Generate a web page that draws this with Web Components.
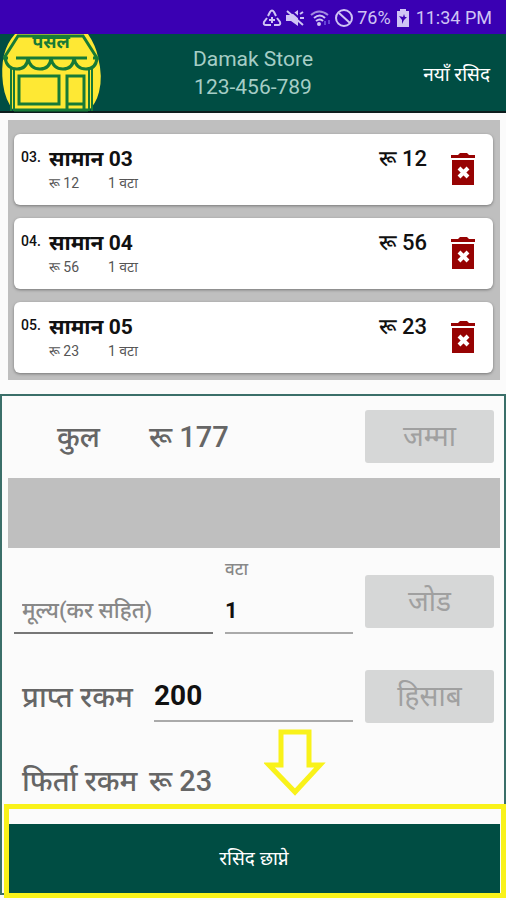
<!DOCTYPE html>
<html lang="ne">
<head>
<meta charset="utf-8">
<meta name="viewport" content="width=device-width, initial-scale=1">
<title>Damak Store</title>
<style>
  body {
    margin: 0;
    background: #fbfbfb;
    color: #111;
    font-family: Roboto, "Noto Sans Devanagari", "Noto Sans", sans-serif;
  }
</style>
</head>
<body>
<store-app></store-app>

<script>
const reset = ':host, *, *::before, *::after { box-sizing: border-box; } button, input { font: inherit; margin: 0; }';

class StatusBar extends HTMLElement {
  constructor() {
    super();
    this.attachShadow({ mode: 'open' });
  }

  connectedCallback() {
    this.shadowRoot.innerHTML = `
      <style>
        ${reset}
        :host {
          display: flex;
          align-items: center;
          justify-content: flex-end;
          gap: 3px;
          height: 34px;
          padding: 2px 14px 0 0;
          background: #3a00b3;
          color: #cfc4f4;
          font-size: 18px;
          line-height: 24px;
        }
        svg { display: block; flex: none; }
        .battery { margin: 0 3px 0 2px; }
      </style>
      <svg width="20" height="18" viewBox="0 0 20 18" fill="none" stroke="currentColor" stroke-width="2">
        <path d="M6 7l2-4q2-3 4 0l2 4M15 9l3 4q1 3-2 3h-4M9 16H4q-3 0-2-3l3-4"/>
        <path d="M7 11h6M10 8v6"/>
      </svg>
      <svg width="20" height="18" viewBox="0 0 20 18">
        <path fill="currentColor" d="M1 6h5l7-5v16l-7-5H1z"/>
        <path d="M4 0l16 14" stroke="#3a00b3" stroke-width="2"/>
        <path d="M2 2l16 14M15 5l3-2M15 9h4" stroke="currentColor" stroke-width="2"/>
      </svg>
      <svg width="24" height="18" viewBox="0 0 24 18" fill="none" stroke="currentColor" stroke-width="2">
        <path d="M3 6q8-7 17 0" opacity=".7"/>
        <path d="M6 9q6-5 11 0M8 12q4-3 7 0"/>
        <circle cx="11" cy="15" r="1" fill="currentColor"/>
        <path d="M17 12v4M21 11v4" stroke="#6545d6"/>
      </svg>
      <svg width="19" height="18" viewBox="0 0 19 18" fill="none" stroke="currentColor" stroke-width="2">
        <circle cx="9" cy="9" r="8"/>
        <path d="M4 4l11 10"/>
      </svg>
      <span>76%</span>
      <svg class="battery" width="14" height="18" viewBox="0 0 14 18">
        <path fill="currentColor" d="M4 0h6v2h3v16H1V2h3z"/>
        <path fill="#3a00b3" d="M3 7l4 1 1-3 1 3h2l-3 3-2 4v-4z"/>
      </svg>
      <span>11:34 PM</span>
    `;
  }
}

class StoreLogo extends HTMLElement {
  constructor() {
    super();
    this.attachShadow({ mode: 'open' });
  }

  connectedCallback() {
    this.shadowRoot.innerHTML = `
      <style>
        :host { display: block; }
        svg { display: block; overflow: visible; }
        text { font-size: 18px; font-weight: 700; }
      </style>
      <svg width="102" height="77" viewBox="0 0 102 77" role="img" aria-label="पसल">
        <path fill="#fee834" d="M15 0h73q8 12 10 23 5 20 1 35-3 12-11 19H14Q5 66 3 50 1 34 4 21 7 9 15 0z"/>
        <g fill="none" stroke="#177a36" stroke-width="3">
          <path d="M4 24 18 2h65l14 22M3 24h5M16 24h71M93 24h6"/>
          <path d="M5 24q2 11 12 11t11-11q2 11 12 11t11-11q2 11 12 11t11-11q2 11 12 11t11-11"/>
          <path d="M11 34v43M14 36v41M89 36v41M92 34v43" stroke-width="2"/>
          <path d="M19 42h40v28H19zM67 77V42h17v35M67 70h17M14 76h74"/>
        </g>
        <text x="51" y="14" text-anchor="middle" fill="#177a36">पसल</text>
      </svg>
    `;
  }
}

class StoreHeader extends HTMLElement {
  constructor() {
    super();
    this.attachShadow({ mode: 'open' });
  }

  connectedCallback() {
    this.shadowRoot.innerHTML = `
      <style>
        ${reset}
        :host {
          display: grid;
          grid-template-columns: 1fr auto 1fr;
          align-items: center;
          height: 79px;
          background: #004d43;
          border-bottom: 2px solid #0c1c1c;
        }
        .store {
          color: #a6cdc6;
          font-size: 21px;
          line-height: 28px;
          text-align: center;
        }
        button {
          justify-self: end;
          padding: 6px 16px 2px;
          border: 0;
          background: none;
          color: #fff;
          font-size: 19px;
          line-height: 28px;
        }
      </style>
      <store-logo></store-logo>
      <div class="store">
        <div>Damak Store</div>
        <div>123-456-789</div>
      </div>
      <button type="button">नयाँ रसिद</button>
    `;
  }
}

class BillItem extends HTMLElement {
  constructor() {
    super();
    this.attachShadow({ mode: 'open' });
  }

  connectedCallback() {
    const number = this.getAttribute('number');
    const price = this.getAttribute('price');

    this.shadowRoot.innerHTML = `
      <style>
        ${reset}
        :host {
          display: grid;
          grid-template-columns: 28px 1fr auto 48px;
          height: 71px;
          padding: 12px 18px 0 7px;
          border-radius: 6px;
          background: #fff;
          box-shadow: 0 1px 3px #777;
        }
        .number { font-size: 14px; font-weight: 500; line-height: 22px; }
        .name { font-size: 21px; font-weight: 700; line-height: 26px; }
        .total { font-size: 22px; font-weight: 500; line-height: 26px; }
        .detail {
          display: grid;
          grid-template-columns: 59px auto;
          justify-content: start;
          color: #555;
          font-size: 14px;
          line-height: 22px;
        }
        button {
          place-self: start end;
          width: 24px;
          margin-top: 7px;
          padding: 0;
          border: 0;
          background: none;
        }
        svg { display: block; }
      </style>
      <div class="number">${number}.</div>
      <div>
        <div class="name"><slot></slot></div>
        <div class="detail"><span>रू ${price}</span><span>1 वटा</span></div>
      </div>
      <div class="total">रू ${price}</div>
      <button type="button" aria-label="Delete">
        <svg width="24" height="32" viewBox="0 0 24 32">
          <path fill="#970303" d="M0 2h7l2-2h7l2 2h6v3H0zM1 7h22v25H1z"/>
          <path d="M8 15l9 9M17 15l-9 9" stroke="#fff" stroke-width="4"/>
        </svg>
      </button>
    `;
  }
}

class BillList extends HTMLElement {
  constructor() {
    super();
    this.attachShadow({ mode: 'open' });
  }

  connectedCallback() {
    this.shadowRoot.innerHTML = `
      <style>
        ${reset}
        :host {
          display: flex;
          flex-direction: column;
          gap: 13px;
          margin: 7px 6px 14px 8px;
          padding: 14px 7px 7px 6px;
          background: #bfbfbf;
        }
      </style>
      <slot></slot>
    `;
  }
}

class BillForm extends HTMLElement {
  constructor() {
    super();
    this.attachShadow({ mode: 'open' });
  }

  connectedCallback() {
    this.shadowRoot.innerHTML = `
      <style>
        ${reset}
        :host {
          display: block;
          border: 2px solid #3b6f69;
          color: #666;
          font-size: 29px;
          font-weight: 500;
          line-height: 40px;
        }
        .row {
          display: grid;
          grid-template-columns: 120px 1fr 129px;
          column-gap: 12px;
          align-items: center;
          padding: 0 10px 0 20px;
        }
        .caption { white-space: nowrap; }
        .row.sum, .row.change {
          grid-template-columns: 127px 1fr 129px;
          column-gap: 0;
        }
        .row.sum { padding-top: 14px; }
        .sum .caption { padding-right: 14px; text-align: center; }
        .row button {
          height: 53px;
          padding: 0;
          border: 0;
          border-radius: 3px;
          background: #d6d7d7;
          color: #a0a0a0;
          font-size: 28px;
          font-weight: 400;
        }
        .strip {
          height: 70px;
          margin: 15px 4px 11px 6px;
          background: #bfbfbf;
        }
        input {
          display: block;
          width: 100%;
          min-width: 0;
          border: 0;
          border-bottom: 2px solid #aaa;
          border-radius: 0;
          padding: 0;
          background: none;
          outline: 0;
          color: #111;
          font-weight: 700;
        }
        .row.entry {
          grid-template-columns: 199px 1fr 129px;
          padding-left: 12px;
        }
        .entry input { height: 46px; font-size: 22px; }
        .entry label {
          display: block;
          padding-bottom: 9px;
          color: #888;
          font-size: 17px;
          line-height: 20px;
        }
        .entry button { margin-top: 10px; }
        .entry .price { align-self: end; padding-left: 8px; border-color: #777; }
        .price::placeholder { color: #888; font-weight: 500; opacity: 1; }
        .row.paid { margin-top: 36px; }
        .paid input { height: 50px; font-size: 28px; }
        .row.change { margin-top: 38px; padding-bottom: 23px; }
        .print { position: relative; }
        .print button {
          display: block;
          width: calc(100% - 10px);
          height: 69px;
          margin: 0 4px 0 6px;
          border: 0;
          background: #004d43;
          color: #fff;
          font-size: 19px;
          font-weight: 400;
        }
        /* highlight drawn over the print button */
        .frame {
          position: absolute;
          inset: -20px -2px -5px 2px;
          border: 5px solid #f9f21a;
          pointer-events: none;
        }
        .hint {
          position: absolute;
          left: calc(50% + 11px);
          top: -95px;
        }
      </style>
      <div class="row sum">
        <span class="caption">कुल</span>
        <output>रू 177</output>
        <button type="button">जम्मा</button>
      </div>
      <div class="strip"></div>
      <div class="row entry">
        <input class="price" type="text" aria-label="मूल्य(कर सहित)" placeholder="मूल्य(कर सहित)">
        <div>
          <label for="qty">वटा</label>
          <input id="qty" type="text" inputmode="numeric" value="1">
        </div>
        <button type="button">जोड</button>
      </div>
      <div class="row paid">
        <label class="caption" for="paid">प्राप्त रकम</label>
        <input id="paid" type="text" inputmode="numeric" value="200">
        <button type="button">हिसाब</button>
      </div>
      <div class="row change">
        <span class="caption">फिर्ता रकम</span>
        <output>रू 23</output>
      </div>
      <div class="print">
        <button type="button">रसिद छाप्ने</button>
        <div class="frame"></div>
        <svg class="hint" width="62" height="68" viewBox="0 0 62 68" fill="none" stroke="#f9f21a" stroke-width="5">
          <path d="M17 3h28v33h11L31 63 5 36h12z"/>
        </svg>
      </div>
    `;
  }
}

class StoreApp extends HTMLElement {
  constructor() {
    super();
    this.attachShadow({ mode: 'open' });
  }

  connectedCallback() {
    this.shadowRoot.innerHTML = `
      <style>
        :host { display: block; overflow: hidden; padding-bottom: 7px; }
      </style>
      <status-bar></status-bar>
      <store-header></store-header>
      <bill-list>
        <bill-item number="03" price="12">सामान 03</bill-item>
        <bill-item number="04" price="56">सामान 04</bill-item>
        <bill-item number="05" price="23">सामान 05</bill-item>
      </bill-list>
      <bill-form></bill-form>
    `;
  }
}

customElements.define('status-bar', StatusBar);
customElements.define('store-logo', StoreLogo);
customElements.define('store-header', StoreHeader);
customElements.define('bill-item', BillItem);
customElements.define('bill-list', BillList);
customElements.define('bill-form', BillForm);
customElements.define('store-app', StoreApp);
</script>
</body>
</html>
